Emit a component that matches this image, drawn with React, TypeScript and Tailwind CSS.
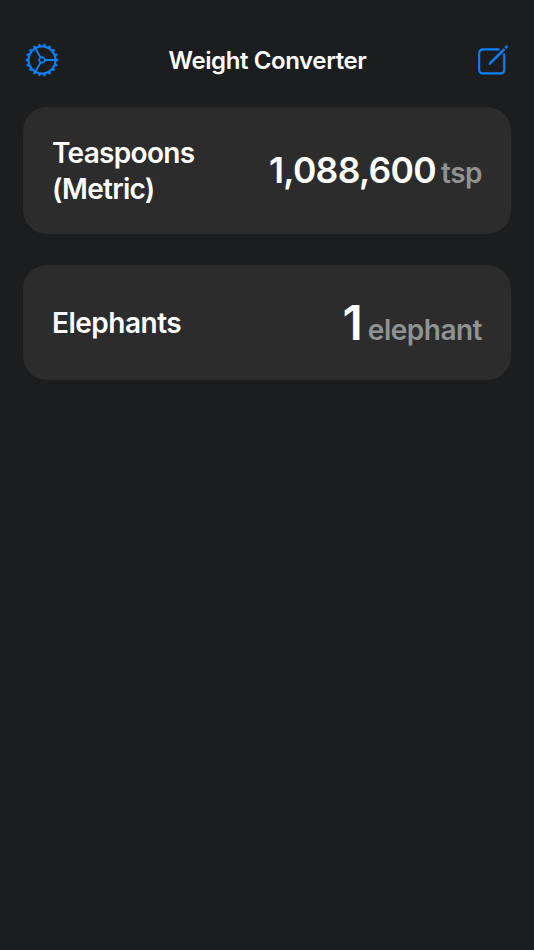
type Conversion = {
  name: string;
  value: string;
  unit: string;
  cardClass: string;
  nameClass: string;
  valueClass: string;
};

const conversions: Conversion[] = [
  {
    name: 'Teaspoons (Metric)',
    value: '1,088,600',
    unit: 'tsp',
    cardClass: 'h-[127px]',
    nameClass: 'tracking-[-0.7px]',
    valueClass: 'text-[35.5px] tracking-[-0.7px]',
  },
  {
    name: 'Elephants',
    value: '1',
    unit: 'elephant',
    cardClass: 'h-[115px]',
    nameClass: 'tracking-[-0.5px]',
    valueClass: 'text-[48px]',
  },
];

// 18 teeth, 20 degrees apart
const teeth = Array.from({ length: 18 }, (_, i) => i * 20);

function GearIcon() {
  return (
    <svg width="34" height="34" viewBox="-17 -17 34 34" fill="none" stroke="currentColor">
      <circle r="13.5" strokeWidth="2.1" />
      {teeth.map((angle) => (
        <path key={angle} d="M14 -1.3L16.1 -0.8V0.8L14 1.3Z" fill="currentColor" strokeWidth="0.4" transform={`rotate(${angle})`} />
      ))}
      <circle r="2.8" strokeWidth="1.8" />
      <path d="M3 0H13.5M-1.5 -2.6L-6.7 -11.7M-1.5 2.6L-6.7 11.7" strokeWidth="1.9" />
    </svg>
  );
}

function ComposeIcon() {
  return (
    <svg width="32" height="32" viewBox="0 0 32 32" fill="none" stroke="currentColor" strokeLinecap="round">
      <path d="M21.6 5.4H6.2Q2.2 5.4 2.2 9.4V25.4Q2.2 29.4 6.2 29.4H23.2Q27.2 29.4 27.2 25.4V10.4" strokeWidth="2.1" />
      <path d="M13.2 19.2L26.7 5.8" strokeWidth="2.5" />
      <path d="M12.2 20.4L13.6 19.6" strokeWidth="1.2" />
      <path d="M29.1 3.2L29.5 2.8" strokeWidth="2.7" />
    </svg>
  );
}

function ConversionCard({ item }: { item: Conversion }) {
  return (
    <div className={`flex items-center justify-between rounded-[24px] bg-[#2b2c2b] px-[29px] ${item.cardClass}`}>
      <h2 className={`w-[160px] text-[28px] leading-[36px] font-semibold ${item.nameClass}`}>{item.name}</h2>
      <div className="flex items-baseline gap-[5px] leading-none font-semibold">
        <span className={item.valueClass}>{item.value}</span>
        <span className="text-[28px] tracking-[-0.5px] text-[#929292]">{item.unit}</span>
      </div>
    </div>
  );
}

export default function App() {
  return (
    <div className="min-h-screen bg-[#1c1d1f] font-['Inter',sans-serif] text-white">
      <header className="flex h-[107px] items-center justify-between px-[25px] pt-[13px]">
        <button aria-label="Settings" className="text-[#0a82ff]">
          <GearIcon />
        </button>
        <h1 className="pt-px pr-px text-[24px] font-semibold tracking-[-0.4px]">Weight Converter</h1>
        <button aria-label="Edit" className="text-[#0a82ff]">
          <ComposeIcon />
        </button>
      </header>

      <main className="flex flex-col gap-[31px] px-[23px]">
        {conversions.map((item) => (
          <ConversionCard key={item.name} item={item} />
        ))}
      </main>
    </div>
  );
}
